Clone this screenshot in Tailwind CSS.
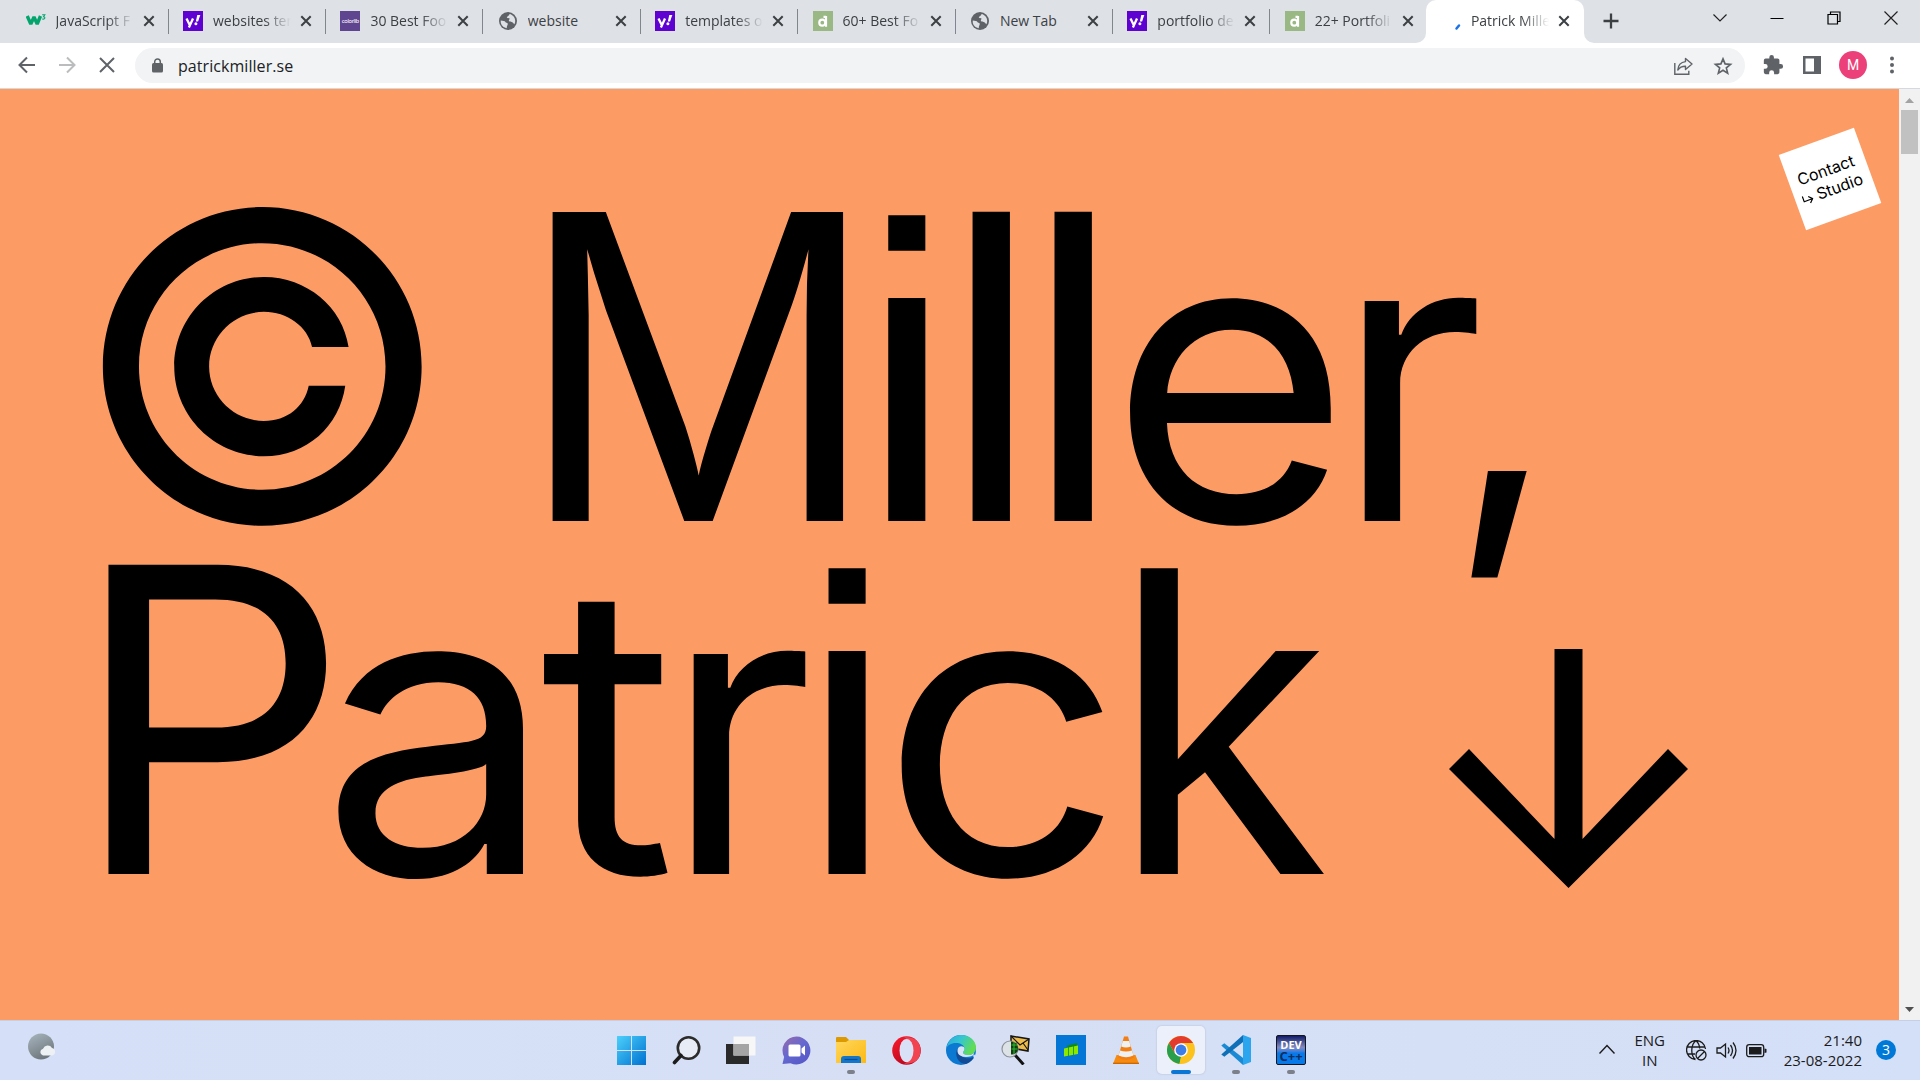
<!DOCTYPE html>
<html lang="en">
<head>
<meta charset="utf-8">
<title>Patrick Miller</title>
<script src="https://cdn.jsdelivr.net/npm/@tailwindcss/browser@4"></script>
</head>
<body class="flex h-screen w-screen flex-col overflow-hidden bg-white font-['Open_Sans',sans-serif] text-[#3c4043]">

<svg class="hidden">
  <symbol id="x" viewBox="0 0 12 12"><path d="M1.3 1.3 10.7 10.7M10.7 1.3 1.3 10.7" stroke="#3c4043" stroke-width="2" fill="none"/></symbol>
  <symbol id="globe" viewBox="0 0 20 20"><circle cx="10" cy="10" r="9" fill="#5f6368"/><path d="M2.8 9.5c2 .2 4.2 .3 4.6 1.6.3 1 1.900.4 2.300 1.500.4 1.200-.8 1.700-1 4.600C4.800 16.600 2.200 13.300 2.800 9.500ZM11.500 2.900c3.500.7 5.700 3.600 5.700 7 0 1.200-.3 2.300-.8 3.300-1-.3-1.100-2-2.600-2.200-1.500-.2-2.500-.1-2.900-1.200-.4-1.200 1-1.300.6-2.200-.5-.9-2.100-.1-2.600-1.200-.4-1.200 2.300-1.200 2.600-3.500Z" fill="#dee1e6"/></symbol>
  <symbol id="yahoo" viewBox="0 0 20 20"><path d="M0 0h20v20H0z" fill="#5f01d1"/><path d="M3.500 7.500 6.500 13.500M10 7.500 5.900 16.500" stroke="#fff" stroke-width="2.300" fill="none"/><path d="M14.300 4h3l-2.200 6.500h-2.300z" fill="#fff"/><circle cx="12.900" cy="12.700" r="1.500" fill="#fff"/></symbol>
  <symbol id="dd" viewBox="0 0 20 20"><path d="M0 0h20v20H0z" fill="#9ab883"/><circle cx="9.300" cy="11.700" r="3" fill="none" stroke="#fff" stroke-width="2.200"/><path d="M13 5v10.800M10.500 5.800H13" stroke="#fff" stroke-width="2.200"/></symbol>
</svg>

<!-- Tab strip -->
<header class="flex h-[43px] shrink-0 bg-[#dee1e6] pl-[11.6px] text-sm">
  <div class="flex h-[43px] w-[157.4px] shrink-0 items-center pb-px pl-3.5">
    <svg class="h-5 w-5 shrink-0" viewBox="0 0 20 20"><path d="M1.200 5 4.800 13 8 6l3.200 7 3.300-8" fill="none" stroke="#04a56c" stroke-width="3.400" stroke-linejoin="bevel"/><path d="M16.200 3.800h2.600l-1.300 1.900c2.200.2 1.700 3-1.300 2.300" fill="none" stroke="#04a56c" stroke-width="1.100"/></svg>
    <span class="ml-2.5 w-[78px] shrink-0 overflow-hidden whitespace-nowrap mask-r-from-65%">JavaScript F</span>
    <svg class="ml-[9px] h-3 w-3 shrink-0"><use href="#x"/></svg><i class="ml-[13px] h-[25px] w-px bg-[#80868b]"></i>
  </div>
  <div class="flex h-[43px] w-[157.4px] shrink-0 items-center pb-px pl-3.5">
    <svg class="h-5 w-5 shrink-0"><use href="#yahoo"/></svg>
    <span class="ml-2.5 w-[78px] shrink-0 overflow-hidden whitespace-nowrap mask-r-from-65%">websites ter</span>
    <svg class="ml-[9px] h-3 w-3 shrink-0"><use href="#x"/></svg><i class="ml-[13px] h-[25px] w-px bg-[#80868b]"></i>
  </div>
  <div class="flex h-[43px] w-[157.4px] shrink-0 items-center pb-px pl-3.5">
    <div class="flex h-5 w-5 shrink-0 items-center justify-center bg-[#5f4490] font-['Lato',sans-serif] text-[6px] tracking-[-0.3px] text-white">colorlib</div>
    <span class="ml-2.5 w-[78px] shrink-0 overflow-hidden whitespace-nowrap mask-r-from-65%">30 Best Foo</span>
    <svg class="ml-[9px] h-3 w-3 shrink-0"><use href="#x"/></svg><i class="ml-[13px] h-[25px] w-px bg-[#80868b]"></i>
  </div>
  <div class="flex h-[43px] w-[157.4px] shrink-0 items-center pb-px pl-3.5">
    <svg class="h-5 w-5 shrink-0"><use href="#globe"/></svg>
    <span class="ml-2.5 w-[78px] shrink-0 overflow-hidden whitespace-nowrap">website</span>
    <svg class="ml-[9px] h-3 w-3 shrink-0"><use href="#x"/></svg><i class="ml-[13px] h-[25px] w-px bg-[#80868b]"></i>
  </div>
  <div class="flex h-[43px] w-[157.4px] shrink-0 items-center pb-px pl-3.5">
    <svg class="h-5 w-5 shrink-0"><use href="#yahoo"/></svg>
    <span class="ml-2.5 w-[78px] shrink-0 overflow-hidden whitespace-nowrap mask-r-from-65%">templates o</span>
    <svg class="ml-[9px] h-3 w-3 shrink-0"><use href="#x"/></svg><i class="ml-[13px] h-[25px] w-px bg-[#80868b]"></i>
  </div>
  <div class="flex h-[43px] w-[157.4px] shrink-0 items-center pb-px pl-3.5">
    <svg class="h-5 w-5 shrink-0"><use href="#dd"/></svg>
    <span class="ml-2.5 w-[78px] shrink-0 overflow-hidden whitespace-nowrap mask-r-from-65%">60+ Best Fo</span>
    <svg class="ml-[9px] h-3 w-3 shrink-0"><use href="#x"/></svg><i class="ml-[13px] h-[25px] w-px bg-[#80868b]"></i>
  </div>
  <div class="flex h-[43px] w-[157.4px] shrink-0 items-center pb-px pl-3.5">
    <svg class="h-5 w-5 shrink-0"><use href="#globe"/></svg>
    <span class="ml-2.5 w-[78px] shrink-0 overflow-hidden whitespace-nowrap">New Tab</span>
    <svg class="ml-[9px] h-3 w-3 shrink-0"><use href="#x"/></svg><i class="ml-[13px] h-[25px] w-px bg-[#80868b]"></i>
  </div>
  <div class="flex h-[43px] w-[157.4px] shrink-0 items-center pb-px pl-3.5">
    <svg class="h-5 w-5 shrink-0"><use href="#yahoo"/></svg>
    <span class="ml-2.5 w-[78px] shrink-0 overflow-hidden whitespace-nowrap mask-r-from-65%">portfolio de</span>
    <svg class="ml-[9px] h-3 w-3 shrink-0"><use href="#x"/></svg><i class="ml-[13px] h-[25px] w-px bg-[#80868b]"></i>
  </div>
  <div class="flex h-[43px] w-[157.4px] shrink-0 items-center pb-px pl-3.5">
    <svg class="h-5 w-5 shrink-0"><use href="#dd"/></svg>
    <span class="ml-2.5 w-[78px] shrink-0 overflow-hidden whitespace-nowrap mask-r-from-65%">22+ Portfoli</span>
    <svg class="ml-[9px] h-3 w-3 shrink-0"><use href="#x"/></svg>
  </div>
  <div class="relative -ml-[2.2px] flex h-[43px] w-[158px] shrink-0 items-center rounded-t-[10px] bg-white pb-px pl-[15px]">
    <svg class="absolute bottom-0 -left-[10px] h-[10px] w-[10px]" viewBox="0 0 10 10"><path d="M10 0v10H0A10 10 0 0 0 10 0Z" fill="#fff"/></svg>
    <svg class="absolute -right-[10px] bottom-0 h-[10px] w-[10px]" viewBox="0 0 10 10"><path d="M0 0v10h10A10 10 0 0 1 0 0Z" fill="#fff"/></svg>
    <svg class="h-5 w-5 shrink-0" viewBox="0 0 20 20"><path d="M15.500 17.500 18 14.500" stroke="#1a73e8" stroke-width="2.500" stroke-linecap="round"/></svg>
    <span class="ml-2.5 w-[78px] shrink-0 overflow-hidden whitespace-nowrap mask-r-from-65%">Patrick Mille</span>
    <svg class="ml-[9px] h-3 w-3 shrink-0"><use href="#x"/></svg>
  </div>
  <svg class="mt-[13px] ml-[19px] h-4 w-4" viewBox="0 0 16 16"><path d="M8 .5v15M.5 8h15" stroke="#3c4043" stroke-width="2.300"/></svg>
  <div class="mr-[22px] ml-auto flex h-9 items-center gap-[43px]">
    <svg class="h-3.5 w-3.5" viewBox="0 0 14 14"><path d="m.5 3.500 6.500 6.500 6.500-6.500" fill="none" stroke="#222" stroke-width="1.200"/></svg>
    <svg class="h-3.5 w-3.5" viewBox="0 0 14 14"><path d="M.5 7.500h13" stroke="#000"/></svg>
    <svg class="h-3.5 w-3.5" viewBox="0 0 14 14"><path d="M1 3.500h9.500V13H1ZM3.500 3.500V1H13v9.500h-2.500" fill="none" stroke="#000" stroke-width="1.200"/></svg>
    <svg class="h-3.5 w-3.5" viewBox="0 0 14 14"><path d="m.5.5 13 13m0-13-13 13" stroke="#222" stroke-width="1.200"/></svg>
  </div>
</header>

<!-- Toolbar -->
<nav class="flex h-[46px] shrink-0 items-center border-b border-[#d5d8dc] bg-white pr-[22px] pb-px pl-[18px]">
  <svg class="h-[18px] w-[18px]" viewBox="0 0 18 18"><path d="M17 9H2M9 1.500 1.500 9 9 16.500" fill="none" stroke="#5f6368" stroke-width="2"/></svg>
  <svg class="ml-[22px] h-[18px] w-[18px]" viewBox="0 0 18 18"><path d="M1 9h15M9 1.500 16.500 9 9 16.500" fill="none" stroke="#babcbe" stroke-width="2"/></svg>
  <svg class="ml-[22px] h-[18px] w-[18px]" viewBox="0 0 18 18"><path d="m2 2 14 14M16 2 2 16" stroke="#5f6368" stroke-width="2"/></svg>
  <div class="mt-px ml-[19px] flex h-[35px] w-[1610px] items-center rounded-full bg-[#f1f3f4] pr-[12px] pl-[17px]">
    <svg class="h-[15px] w-[11px]" viewBox="0 0 11 15"><rect y="5" width="11" height="9.500" rx="1.500" fill="#5f6368"/><path d="M2.700 6V3.800a2.800 2.800 0 0 1 5.600 0V6" fill="none" stroke="#5f6368" stroke-width="1.500"/></svg>
    <span class="ml-[15px] text-base tracking-[0.06px] text-[#202124]">patrickmiller.se</span>
    <svg class="ml-auto h-5 w-5" viewBox="0 0 20 20"><path d="M1.800 7v11.200h14v-3.500" fill="none" stroke="#5f6368" stroke-width="1.400"/><path d="M12.500 2.500 19 8l-6.500 5.500v-3.200C9 10.200 7 11 4.800 14c.3-4.500 3-7.900 7.700-8.400Z" fill="none" stroke="#5f6368" stroke-width="1.400" stroke-linejoin="round"/></svg>
    <svg class="ml-5 h-5 w-5" viewBox="0 0 24 24"><path d="m12 3.500 2.500 6 6.500.5-5 4.200 1.600 6.400L12 17.200l-5.600 3.400L8 14.200 3 10l6.500-.5z" fill="none" stroke="#5f6368" stroke-width="2"/></svg>
  </div>
  <svg class="ml-[17px] h-[22px] w-[22px]" viewBox="0 0 24 24"><path d="M20.500 11H19V7a2 2 0 0 0-2-2h-4V3.500a2.500 2.500 0 0 0-5 0V5H4a2 2 0 0 0-2 2v3.800h1.500a2.700 2.700 0 0 1 0 5.400H2V20a2 2 0 0 0 2 2h3.800v-1.500a2.700 2.700 0 0 1 5.400 0V22H17a2 2 0 0 0 2-2v-4h1.500a2.500 2.500 0 0 0 0-5Z" fill="#5f6368"/></svg>
  <svg class="ml-[19px] h-[18px] w-[18px]" viewBox="0 0 18 18"><path d="M0 0h18v18H0ZM2.500 2.500v13H11v-13Z" fill="#5f6368" fill-rule="evenodd"/></svg>
  <div class="ml-[18px] flex h-7 w-7 items-center justify-center rounded-full bg-[#ec407a] font-['Roboto',sans-serif] text-sm text-white">M</div>
  <svg class="ml-auto h-[18px] w-3" viewBox="0 0 12 18"><circle cx="6" cy="2.500" r="2" fill="#5f6368"/><circle cx="6" cy="9" r="2" fill="#5f6368"/><circle cx="6" cy="15.500" r="2" fill="#5f6368"/></svg>
</nav>

<!-- Page -->
<div class="flex min-h-0 flex-1">
  <main class="relative min-w-0 flex-1 overflow-hidden bg-[#fd9b64] pt-[100px] text-black">
    <h1 class="font-['Inter',sans-serif] text-[425px] leading-[354px] font-normal [font-kerning:none]">
      <span class="flex h-[354px] items-baseline pl-[68px]"><span>©</span><span class="ml-[60.5px] origin-left scale-x-[0.967] font-['Liberation_Sans',sans-serif] text-[449px]">M</span><span class="-ml-[31px] font-['Liberation_Sans',sans-serif] text-[422px]">i</span><span class="-ml-[14px]">l</span><span class="-ml-[21px]">l</span><span class="-ml-[16px] origin-left scale-x-[1.03] text-[403px]">e</span><span class="-ml-[10px] text-[403px]">r</span><span class="relative -top-[11px] -ml-[38px] text-[385px]">,</span></span>
      <span class="flex h-[354px] items-baseline pl-[70px]"><span class="origin-left scale-x-[1.03]">P</span><span class="-ml-[21px] origin-left scale-x-[1.04] text-[403px]">a</span><span class="-ml-[7px] origin-left scale-x-[1.03] text-[403px]">t</span><span class="-ml-[9px] text-[403px]">r</span><span class="-ml-[14px] font-['Liberation_Sans',sans-serif] text-[422px]">i</span><span class="-ml-[14px] origin-left scale-x-[1.06] text-[403px]">c</span><span class="ml-[2px] font-['Liberation_Sans',sans-serif] text-[422px]">k</span>
        <svg class="relative top-[14px] ml-[126px] h-[239px] w-[239px] shrink-0" viewBox="0 0 239 239"><path d="M105.500 0h28v190L219 100l20 20L119.500 239 0 120l20-20 85.500 90Z"/></svg></span>
    </h1>
    <a class="absolute top-[50px] left-[1790px] flex h-20 w-20 -rotate-20 flex-col items-center justify-center bg-white pr-0.5 font-['Inter',sans-serif] text-base leading-5">
      <span>Contact</span>
      <span class="flex items-center gap-1"><svg class="mt-1 h-3 w-[11px]" viewBox="0 0 11 12"><path d="M1 1v5.500h8.500M6.500 3l3.500 3.500L6.500 10" fill="none" stroke="#000" stroke-width="1.200"/></svg>Studio</span>
    </a>
  </main>
  <aside class="flex w-[21px] shrink-0 flex-col items-center bg-[#f1f1f1]">
    <svg class="mt-2 h-[7px] w-[9px]" viewBox="0 0 9 7"><path d="M0 6 4.500 1 9 6Z" fill="#a3a3a3"/></svg>
    <div class="mt-[6px] h-[44px] w-[17px] bg-[#c1c1c1]"></div>
    <svg class="mt-auto mb-[7px] h-[7px] w-[9px]" viewBox="0 0 9 7"><path d="M0 1 4.500 6 9 1Z" fill="#505050"/></svg>
  </aside>
</div>

<!-- Taskbar -->
<footer class="flex h-[60px] shrink-0 items-center border-t border-[#c6cfe4] bg-linear-to-r from-[#d5e0f8] via-[#d6dff4] to-[#d4e0f8] pb-px text-[15px] leading-5 text-[#1b1b1b]">
  <div class="w-[607px] pl-7">
    <svg class="-mt-2 h-[27px] w-[29px]" viewBox="0 0 29 27"><defs><linearGradient id="mg" x2=".5" y2="1"><stop stop-color="#aab7c0"/><stop offset="1" stop-color="#6e777d"/></linearGradient></defs><circle cx="13" cy="13.500" r="13" fill="url(#mg)"/><path d="M15 22.500a3.500 3.500 0 0 1 0-6.800 5 5 0 0 1 9-.8 3.900 3.900 0 0 1 0 7.600Z" fill="#eef1f3"/></svg>
  </div>
  <div class="flex gap-[7px]">
    <div class="flex h-12 w-12 items-center justify-center"><svg class="h-[29px] w-[29px]" viewBox="0 0 29 29"><defs><linearGradient id="w" x2="1" y2="1"><stop stop-color="#4cd0fb"/><stop offset="1" stop-color="#0071d0"/></linearGradient></defs><path d="M0 0h14v14H0ZM15 0h14v14H15ZM0 15h14v14H0ZM15 15h14v14H15Z" fill="url(#w)"/></svg></div>
    <div class="flex h-12 w-12 items-center justify-center"><svg class="h-[29px] w-[29px]" viewBox="0 0 29 29"><circle cx="16.500" cy="12" r="10.700" fill="#e6ebf6" stroke="#2b2b2b" stroke-width="2.600"/><path d="m9 19.500-6.500 7" stroke="#1c1c1c" stroke-width="3.600" stroke-linecap="round"/></svg></div>
    <div class="flex h-12 w-12 items-center justify-center"><svg class="h-[29px] w-[30px]" viewBox="0 0 30 29"><path d="M0 8h23v20H0z" fill="#2a2a2a"/><path d="M7.500.5h22v19h-22z" fill="#f7f7f7"/><path d="M7.500 8H23v11.500H7.500z" fill="#a5a5a5"/></svg></div>
    <div class="flex h-12 w-12 items-center justify-center"><svg class="h-[29px] w-[29px]" viewBox="0 0 29 29"><defs><linearGradient id="tm" x2=".8" y2="1"><stop stop-color="#9c6aa9"/><stop offset=".5" stop-color="#6468cf"/><stop offset="1" stop-color="#5558c8"/></linearGradient></defs><path d="M14.500.5a14 14 0 1 1-6 26.700L.5 28l1.600-7A14 14 0 0 1 14.500.5Z" fill="url(#tm)"/><rect x="6.500" y="8.500" width="12" height="12" rx="1.500" fill="#fff"/><path d="m19.500 12.500 3.500-3v10l-3.500-3Z" fill="#fff"/></svg></div>
    <div class="relative flex h-12 w-12 items-center justify-center"><svg class="h-[28px] w-[30px]" viewBox="0 0 30 28"><defs><linearGradient id="fo" x2="1" y2="1"><stop stop-color="#ffd75e"/><stop offset="1" stop-color="#fcb912"/></linearGradient></defs><path d="M0 2a1 1 0 0 1 1-1h9l3 3v4H0z" fill="#dd9a00"/><path d="M0 6h10l3-2h17v23H0z" fill="url(#fo)"/><path d="M5 27v-4q0-3 3-3h14q3 0 3 3v4Z" fill="#1476c9"/><path d="M8.500 23.500h13" stroke="#0b4d8c" stroke-width="1.200"/></svg><i class="absolute bottom-0 h-1 w-2 rounded-full bg-[#7c808b]"></i></div>
    <div class="flex h-12 w-12 items-center justify-center"><svg class="h-[29px] w-[29px]" viewBox="0 0 29 29"><defs><linearGradient id="op" y2="1" x2=".7"><stop stop-color="#ff1b2d"/><stop offset="1" stop-color="#b0051c"/></linearGradient></defs><circle cx="14.500" cy="14.500" r="14.300" fill="url(#op)"/><path d="M12 1.500c6-1 16.500 1 16.500 13S18 28.500 12 27.500C20 26 20 3 12 1.500Z" fill="#f24450"/><ellipse cx="14.500" cy="14.500" rx="7" ry="11.500" fill="#d8e1f5"/></svg></div>
    <div class="flex h-12 w-12 items-center justify-center"><svg class="h-[30px] w-[30px]" viewBox="0 0 30 30"><defs><linearGradient id="e1" x2="1" y2=".4"><stop stop-color="#2aa5dd"/><stop offset=".5" stop-color="#36c6d0"/><stop offset="1" stop-color="#62dd52"/></linearGradient></defs><circle cx="15" cy="15" r="15" fill="#0b78d1"/><path d="M.5 13C2 5 8 0 15 0c9 0 15 6 15 12.500 0 5-4 7.500-8 7.500-3 0-5-1.200-5-2.500s1.500-1.500 1.500-4C18.500 10 14 8 10 8 5 8 1.500 10.500.5 13Z" fill="url(#e1)"/><path d="M11.500 13.500C8 20 12 29 20 29c4-1.500 7-4.500 8.500-7.500-6 3.500-15 2.500-17-8Z" fill="#124b96"/><path d="M13 12c-3 3-2 10 7 10 4 0 7-1.500 8.500-2.500l1 2.500-1.500 1.500C26 18 30 17 30 14c-1 4-4 6-8 6-3 0-5-1.200-5-2.500s1.500-1.500 1.500-4c0-2-3.500-3-5.500-1.500Z" fill="#d8e3f7"/></svg></div>
    <div class="flex h-12 w-12 items-center justify-center"><svg class="h-[30px] w-[30px]" viewBox="0 0 30 30"><path d="m10 1 18 3-1 12-17-3Z" fill="#edbd4c" stroke="#161616" stroke-width="1.500"/><path d="m10 1 9 9 9-6M10 13l6-5M27 15l-5-7" fill="none" stroke="#161616" stroke-width="1.200"/><path d="m14 20 8.500 9.500" stroke="#111" stroke-width="3"/><circle cx="9" cy="14" r="8" fill="#dde2e6" stroke="#8c9298" stroke-width="1.200"/><path d="M10 6.500c4 0 7 3 7 7s-3 6-7 6Z" fill="#153d12"/><path d="M10.500 10h6M10.500 14h6M13 7v12" stroke="#25c12a"/></svg></div>
    <div class="flex h-12 w-12 items-center justify-center"><svg class="h-[30px] w-[30px]" viewBox="0 0 30 30"><path d="M0 0h30v30H0z" fill="#0376d6"/><path d="m10 11 11-3 .5 9.500" fill="#118a17"/><path d="m8 13.500 14-3v8.500l-14 2.500Z" fill="#8ce800"/><path d="M12.500 12v9M17.500 11v9" stroke="#149b16" stroke-width=".9"/></svg></div>
    <div class="flex h-12 w-12 items-center justify-center"><svg class="h-[30px] w-[26px]" viewBox="0 0 26 30"><path d="M3.500 20h19l3.500 9H0Z" fill="#f68b12"/><path d="m11 1.500h4l6 21q-8 5-16 0Z" fill="#f37f14"/><path d="m9.800 6 6.400 0 1.600 5.500q-4.800 1.800-9.600 0ZM7 15.500q6 2 12 0l1.400 5q-7.400 3.500-14.800 0Z" fill="#eef0f2"/><path d="M0 28.300h26" stroke="#c96500" stroke-width="1.200"/></svg></div>
    <div class="relative flex h-12 w-12 items-center justify-center rounded-[5px] bg-[#ecf0fa] shadow-[0_0_1px_1px_rgba(190,200,222,.5)]"><svg class="h-[28px] w-[28px]" viewBox="0 0 28 28"><circle cx="14" cy="14" r="14" fill="#fcc31e"/><path d="M1.900 7A14 14 0 0 1 26.100 7H14L8 17.500Z" fill="#e33b2e"/><path d="M1.900 7 8 17.500 14 21l-1.500 7A14 14 0 0 1 1.900 7Z" fill="#2a9f4b"/><path d="M14 28l6-10.500L14 21l-1.500 7Z" fill="#fcc31e"/><circle cx="14" cy="14" r="6.800" fill="#fff"/><circle cx="14" cy="14" r="5.400" fill="#3c7de8"/></svg><i class="absolute bottom-0 h-1 w-5 rounded-full bg-[#0b76d3]"></i></div>
    <div class="relative flex h-12 w-12 items-center justify-center"><svg class="h-[30px] w-[30px]" viewBox="0 0 30 30"><path d="M.3 10.500 3.300 8.300 24 24.500 22 30Z" fill="#1a8ad4"/><path d="M.3 19.500l3 2.200L24 5.500 22 0Z" fill="#0f70b8"/><path d="m22 0 8 3v24l-8 3Z" fill="#2ba5ee"/></svg><i class="absolute bottom-0 h-1 w-2 rounded-full bg-[#7c808b]"></i></div>
    <div class="relative flex h-12 w-12 items-center justify-center"><div class="flex h-[30px] w-[30px] flex-col items-center overflow-hidden rounded-[2px] border border-[#101520] bg-linear-to-b from-[#151b68] via-[#8489bd] via-40% to-[#0879e8] to-60% font-['Open_Sans',sans-serif] text-[11px] leading-[13px] font-bold text-white"><span class="mt-0.5">DEV</span><span class="-mt-px text-[13px] text-[#0b2d60]">C++</span></div><i class="absolute bottom-0 h-1 w-2 rounded-full bg-[#7c808b]"></i></div>
  </div>
  <div class="mr-6 ml-auto flex items-center">
    <svg class="h-4 w-4" viewBox="0 0 16 16"><path d="m.5 11.500 7.500-8 7.500 8" fill="none" stroke="#1b1b1b" stroke-width="1.400"/></svg>
    <div class="ml-[19px] w-[32px] text-center">ENG<br>IN</div>
    <svg class="ml-[20px] h-[21px] w-[21px]" viewBox="0 0 21 21"><g fill="none" stroke="#1b1b1b" stroke-width="1.300"><path d="M9.500 19.500A9.500 9.500 0 1 1 19.500 9M1 7h18M1 14h8M9.500 19.500C4 15 5 4 10 .800c2.500 2 3.500 5 3.700 7.700"/><circle cx="15" cy="15" r="5"/><path d="m11.500 18.500 7-7"/></g></svg>
    <svg class="ml-[9px] h-[21px] w-[21px]" viewBox="0 0 21 21"><path d="M1 8h3.500L9.500 4v13l-5-4H1ZM12 7.500q2 3 0 6M14.500 5q4 5.500 0 11M17 2.500q6 8 0 16" fill="none" stroke="#1b1b1b" stroke-width="1.300"/></svg>
    <svg class="ml-[9px] h-[21px] w-[21px]" viewBox="0 0 21 21"><rect x=".7" y="4.700" width="17" height="12" rx="2.500" fill="none" stroke="#1b1b1b" stroke-width="1.300"/><path d="M3 7h12.500v7.500H3ZM18.500 8.500l2 .5v3.500l-2 .5Z" fill="#1b1b1b"/></svg>
    <div class="ml-[17px] text-right">21:40<br>23-08-2022</div>
    <div class="ml-[14px] flex h-5 w-5 items-center justify-center rounded-full bg-[#0078d7] text-sm text-white">3</div>
  </div>
</footer>
</body>
</html>
